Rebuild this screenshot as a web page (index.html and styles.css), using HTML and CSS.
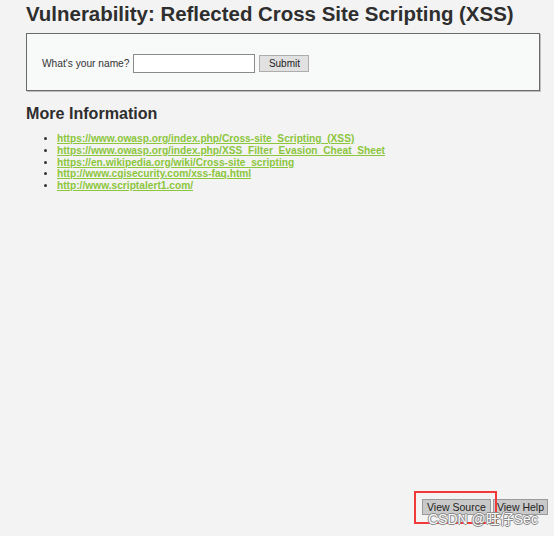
FILE: index.html
```html
<!DOCTYPE html>
<html>
<head>
<meta charset="utf-8">
<link rel="stylesheet" href="styles.css">
</head>
<body>
<div class="page">
  <div class="main">
    <h1 class="title">Vulnerability: Reflected Cross Site Scripting (XSS)</h1>
    <div class="vulnerable-box">
      <form class="name-form">
        <span class="label">What's your name?</span>
        <input class="name-input" type="text">
        <button class="submit-btn" type="button">Submit</button>
      </form>
    </div>
    <h2 class="more-title">More Information</h2>
    <ul class="links">
      <li><a href="#">https://www.owasp.org/index.php/Cross-site_Scripting_(XSS)</a></li>
      <li><a href="#">https://www.owasp.org/index.php/XSS_Filter_Evasion_Cheat_Sheet</a></li>
      <li><a href="#">https://en.wikipedia.org/wiki/Cross-site_scripting</a></li>
      <li><a href="#">http://www.cgisecurity.com/xss-faq.html</a></li>
      <li><a href="#">http://www.scriptalert1.com/</a></li>
    </ul>
  </div>
  <div class="footer-buttons">
    <button class="popup-btn src" type="button">View Source</button>
    <button class="popup-btn" type="button">View Help</button>
  </div>
</div>
<div class="highlight"></div>
<div class="watermark">CSDN @旺仔Sec</div>
</body>
</html>
```

FILE: styles.css
```css
html, body {
  margin: 0;
  padding: 0;
}
body {
  background: #f3f3f3;
  font-family: "Liberation Sans", Arial, sans-serif;
  color: #333;
  width: 554px;
  height: 536px;
  overflow: hidden;
  position: relative;
}
.page {
  display: flex;
  flex-direction: column;
  min-height: 536px;
}
.main {
  padding: 0 14px 0 26px;
}
.title {
  margin: 0;
  padding-top: 2px;
  font-size: 20.45px;
  line-height: 24px;
  font-weight: bold;
  color: #2e2e2e;
}
.vulnerable-box {
  margin-top: 7px;
  height: 56px;
  border: 1px solid #6a6a6a;
  background: #f8f9f9;
  display: flex;
  align-items: center;
  padding-left: 15px;
  box-shadow: 1px 1px 0 #bdbdbd;
}
.name-form {
  display: flex;
  align-items: center;
  margin: 0;
  padding-top: 2px;
}
.label {
  font-size: 10.2px;
  color: #333;
  margin-right: 4px;
}
.name-input {
  width: 122px;
  height: 19px;
  box-sizing: border-box;
  border: 1px solid #8a8a8a;
  background: #fff;
  margin: 0 4px 0 0;
  padding: 0;
}
.submit-btn {
  width: 50px;
  height: 17px;
  box-sizing: border-box;
  border: 1px solid #adadad;
  background: #e1e1e1;
  font-family: "Liberation Sans", Arial, sans-serif;
  font-size: 10px;
  color: #222;
  padding: 0;
  margin: 0;
}
.more-title {
  margin: 12px 0 0 0;
  font-size: 16.1px;
  line-height: 20px;
  font-weight: bold;
  color: #2e2e2e;
}
.links {
  margin: 10px 0 0 0;
  padding-left: 31px;
  list-style: disc;
  font-size: 10.2px;
  line-height: 11.8px;
}
.links li {
  color: #333;
}
.links a {
  color: #8cc63c;
  font-weight: bold;
  text-decoration: underline;
}
.footer-buttons {
  margin-top: auto;
  display: flex;
  justify-content: flex-end;
  gap: 2px;
  padding: 0 6px 21px 0;
}
.popup-btn {
  height: 16px;
  box-sizing: border-box;
  border: 1px solid #9a9a9a;
  background: #c9c9c9;
  font-family: "Liberation Sans", Arial, sans-serif;
  font-size: 10.5px;
  color: #222;
  padding: 0 3px;
  margin: 0;
  line-height: 14px;
}
.popup-btn.src {
  width: 69px;
}
.highlight {
  position: absolute;
  left: 414px;
  top: 491px;
  width: 79px;
  height: 29px;
  border: 2px solid #f23a3a;
}
.watermark {
  position: absolute;
  left: 428px;
  top: 511px;
  font-family: "Liberation Sans", "Noto Sans CJK SC", sans-serif;
  font-size: 14px;
  line-height: 16px;
  color: #fafafa;
  text-shadow: 1px 0 0 #8a8a8a, -1px 0 0 #8a8a8a, 0 1px 0 #8a8a8a, 0 -1px 0 #8a8a8a;
  white-space: nowrap;
}
```
